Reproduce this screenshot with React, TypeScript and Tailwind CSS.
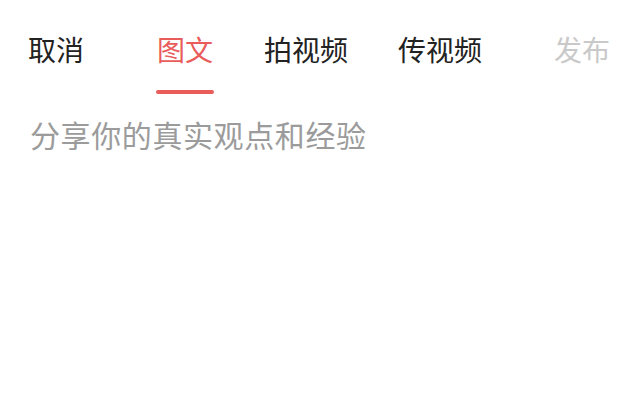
const tabs = [
  { label: "图文", active: true },
  { label: "拍视频", active: false },
  { label: "传视频", active: false },
];

const cjk = { fontFamily: '"Noto Sans CJK SC", "Noto Sans", sans-serif' };

export default function App() {
  return (
    <div className="w-[638px] h-[415px] bg-white overflow-hidden" style={cjk}>
      <div className="flex justify-between items-start px-[28px] pt-[35px]">
        <span className="text-[28px] leading-[28px] text-[#222222]">取消</span>
        <div className="flex gap-[50px]">
          {tabs.map((tab) => (
            <div key={tab.label} className="flex flex-col items-center">
              <span
                className={
                  tab.active
                    ? "text-[28px] leading-[28px] text-[#e95c5a]"
                    : "text-[28px] leading-[28px] text-[#222222]"
                }
              >
                {tab.label}
              </span>
              {tab.active ? (
                <div className="mt-[27px] h-[4px] w-[58px] rounded-full bg-[#e95c5a]" />
              ) : null}
            </div>
          ))}
        </div>
        <span className="text-[28px] leading-[28px] text-[#c9c9c9]">发布</span>
      </div>
      <div className="px-[30px] pt-[25px]">
        <p className="text-[30px] leading-[30px] tracking-[0.6px] text-[#9b9b9b]">分享你的真实观点和经验</p>
      </div>
    </div>
  );
}
